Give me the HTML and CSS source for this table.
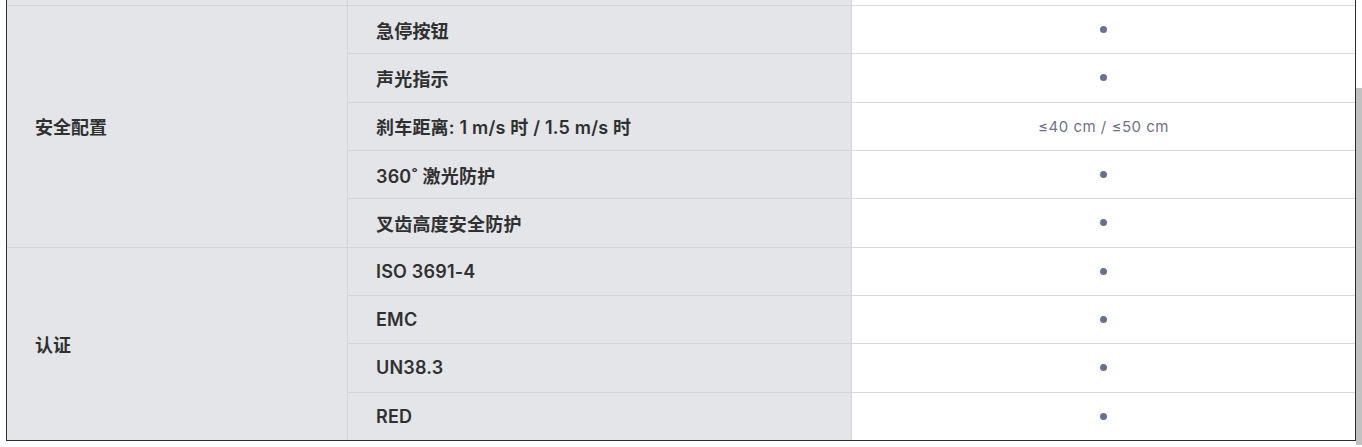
FILE: index.html
```html
<!DOCTYPE html>
<html lang="zh">
<head>
<meta charset="utf-8">
<link rel="stylesheet" href="styles.css">
</head>
<body>
<div class="frame">
  <div class="spec-grid">
    <div class="cell group frag"></div>
    <div class="cell name frag"></div>
    <div class="cell value frag"></div>

    <div class="cell group span5">安全配置</div>
    <div class="cell name">急停按钮</div>
    <div class="cell value"><span class="dot"></span></div>
    <div class="cell name">声光指示</div>
    <div class="cell value"><span class="dot"></span></div>
    <div class="cell name">刹车距离: 1 m/s 时 / 1.5 m/s 时</div>
    <div class="cell value"><span class="txt">≤40 cm / ≤50 cm</span></div>
    <div class="cell name">360˚ 激光防护</div>
    <div class="cell value"><span class="dot"></span></div>
    <div class="cell name">叉齿高度安全防护</div>
    <div class="cell value"><span class="dot"></span></div>

    <div class="cell group span4">认证</div>
    <div class="cell name">ISO 3691-4</div>
    <div class="cell value"><span class="dot"></span></div>
    <div class="cell name">EMC</div>
    <div class="cell value"><span class="dot"></span></div>
    <div class="cell name">UN38.3</div>
    <div class="cell value"><span class="dot"></span></div>
    <div class="cell name">RED</div>
    <div class="cell value"><span class="dot"></span></div>
  </div>
</div>
<div class="scroll-thumb"></div>
</body>
</html>
```
FILE: styles.css
```css
html, body {
  margin: 0;
  padding: 0;
  background: #ffffff;
}
body {
  display: flex;
  align-items: flex-start;
  font-family: Inter, "Noto Sans CJK SC", sans-serif;
}
.frame {
  margin-left: 6px;
  width: 1350px;
  height: 441px;
  box-sizing: border-box;
  border: 1px solid #2e2e2e;
  border-top: none;
  overflow: hidden;
}
.spec-grid {
  display: grid;
  grid-template-columns: 340px 504px 504px;
  grid-template-rows: 5px repeat(9, 1fr);
  height: 440px;
}
.cell {
  display: flex;
  align-items: center;
  box-sizing: border-box;
  border-top: 1px solid #d4d5d9;
  min-height: 0;
}
.frag {
  border-top: none;
}
.group {
  background: #e4e5e9;
  color: #303030;
  font-weight: 600;
  font-size: 18px;
  padding-left: 28px;
}
.span5 { grid-row: span 5; }
.span4 { grid-row: span 4; }
.name {
  background: #e4e5e9;
  border-left: 1px solid #d4d5d9;
  color: #303030;
  font-weight: 600;
  font-size: 18px;
  letter-spacing: 0.2px;
  padding-left: 28px;
}
.value {
  background: #ffffff;
  border-left: 1px solid #d4d5d9;
  border-top-color: #dadadc;
  justify-content: center;
}
.dot {
  width: 7px;
  height: 7px;
  border-radius: 50%;
  background: #687094;
}
.txt {
  font-size: 15px;
  letter-spacing: 0.5px;
  color: #6e7288;
}
.scroll-thumb {
  margin-top: 88px;
  width: 6px;
  height: 357px;
  background: #c2c2c2;
}
```
